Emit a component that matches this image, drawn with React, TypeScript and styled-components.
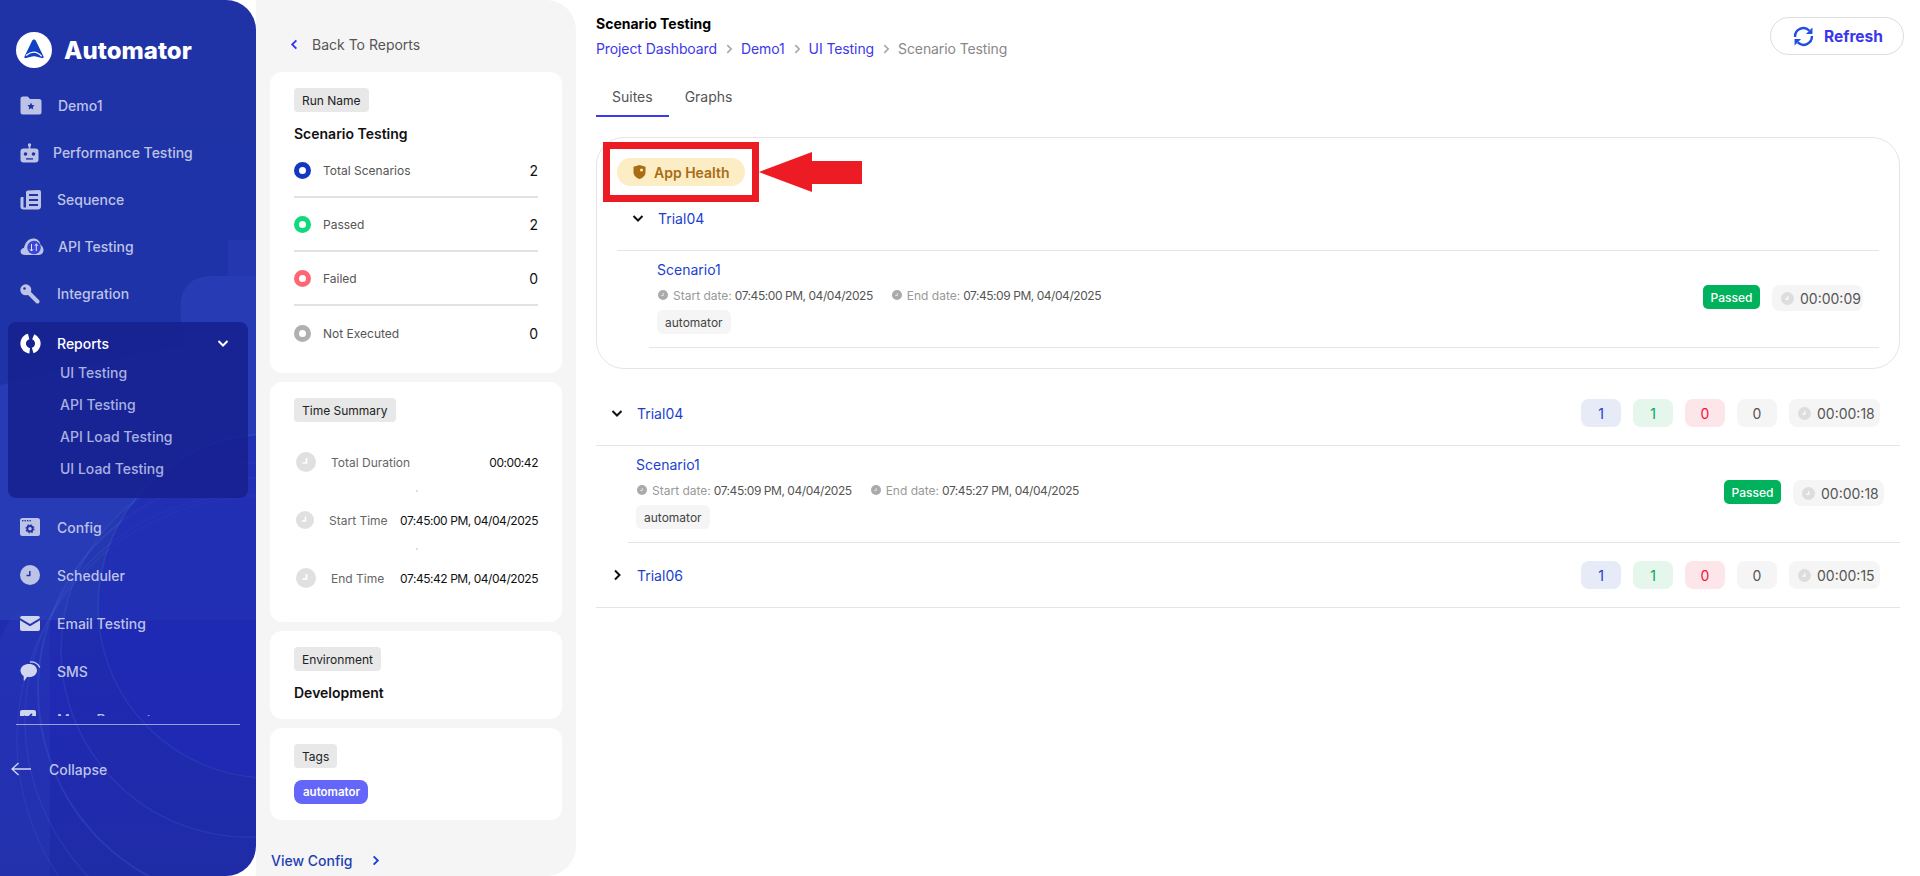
import React from 'react';
import styled, { createGlobalStyle } from 'styled-components';

const GlobalStyle = createGlobalStyle`
  html, body { margin: 0; padding: 0; background: #fff; }
  body { font-family: Inter, "Liberation Sans", sans-serif; font-size: 14px; color: #111; overflow: hidden; }
  * { box-sizing: border-box; }
`;

const Page = styled.div`
  display: flex;
  width: 1920px;
  height: 876px;
  overflow: hidden;
`;

/* sidebar */
const Sidebar = styled.aside`
  position: relative;
  flex: 0 0 256px;
  height: 876px;
  padding-top: 32px;
  border-radius: 0 30px 30px 0;
  background: linear-gradient(180deg, #1f33a7 0%, #1f33a9 55%, #2029b4 80%, #1f2ca6 100%);
  overflow: hidden;
  z-index: 1;
`;

const Waves = styled.svg`
  position: absolute;
  inset: 0;
  width: 256px;
  height: 876px;
`;

const Brand = styled.div`
  position: relative;
  display: flex;
  align-items: center;
  gap: 12px;
  padding-left: 16px;
  height: 36px;
  font-size: 24px;
  font-weight: 800;
  color: #fff;
`;

const NavScroll = styled.nav`
  position: relative;
  height: 634px;
  margin-top: 14px;
  overflow: hidden;
`;

const NavItem = styled.div<{ $h: number }>`
  display: flex;
  align-items: center;
  gap: 13px;
  height: ${p => p.$h}px;
  padding-left: 20px;
  color: #bdc3e7;
  font-weight: 500;
`;

const NavIcon = styled.span<{ $w: number }>`
  display: flex;
  flex: 0 0 ${p => p.$w}px;
  align-items: center;
`;

const ReportsGroup = styled.div`
  margin: 5px 8px;
  padding-bottom: 14px;
  border-radius: 8px;
  background: rgba(22, 32, 140, 0.82);
`;

const ReportsHead = styled.div`
  display: flex;
  align-items: center;
  gap: 13px;
  height: 34px;
  padding: 8px 18px 0 12px;
  color: #fff;
  font-weight: 500;
`;

const ReportsLabel = styled.span`
  flex: 1;
`;

const SubItem = styled.div`
  display: flex;
  align-items: center;
  height: 32px;
  padding-left: 52px;
  color: #a9b1e2;
  font-weight: 500;
`;

const SideRule = styled.div`
  position: relative;
  height: 1px;
  margin: 8px 16px 0;
  background: rgba(255, 255, 255, 0.55);
`;

const CollapseRow = styled.div`
  position: relative;
  display: flex;
  align-items: center;
  gap: 18px;
  height: 32px;
  margin-top: 28px;
  padding-left: 11px;
  color: #bdc3e7;
  font-weight: 500;
`;

/* run summary panel */
const Panel = styled.section`
  display: flex;
  flex-direction: column;
  flex: 0 0 320px;
  min-width: 0;
  height: 876px;
  padding: 34px 14px 6px;
  border-radius: 0 30px 30px 0;
  background: #f5f5f5;
`;

const BackRow = styled.div`
  display: flex;
  align-items: center;
  gap: 11px;
  height: 20px;
  margin: 0 0 18px 18px;
  color: #555;
  font-size: 14px;
`;

const Cards = styled.div`
  display: flex;
  flex-direction: column;
  gap: 9px;
`;

const InfoCard = styled.div<{ $pb?: number }>`
  padding: 16px 24px ${p => p.$pb ?? 16}px;
  border-radius: 12px;
  background: #fff;
`;

const Chip = styled.span`
  display: inline-flex;
  align-items: center;
  height: 24px;
  padding: 0 8px;
  border-radius: 4px;
  background: #e8e8e8;
  font-size: 12px;
  color: #222;
  vertical-align: top;
`;

const CardTitle = styled.div`
  margin-top: 12px;
  font-size: 14px;
  line-height: 20px;
  font-weight: 600;
  color: #111;
`;

const StatRow = styled.div<{ $last?: boolean }>`
  display: flex;
  align-items: center;
  gap: 12px;
  height: 54px;
  border-bottom: ${p => (p.$last ? 'none' : '2px solid #e2e2e2')};
`;

const StatDot = styled.span<{ $color: string }>`
  flex: 0 0 17px;
  width: 17px;
  height: 17px;
  border: 5px solid ${p => p.$color};
  border-radius: 50%;
`;

const StatLabel = styled.span`
  flex: 1;
  font-size: 12px;
  color: #555;
`;

const StatValue = styled.span`
  font-size: 14px;
  color: #111;
`;

const TimeList = styled.div`
  margin-top: 11px;
`;

const TimeRow = styled.div<{ $sep?: boolean }>`
  position: relative;
  display: flex;
  align-items: center;
  gap: 12px;
  height: 58px;
  padding-left: 2px;
  &::after {
    content: '';
    display: ${p => (p.$sep ? 'block' : 'none')};
    position: absolute;
    left: 50%;
    bottom: -1px;
    width: 2px;
    height: 2px;
    background: #ddd;
  }
`;

const TimeLabel = styled.span`
  flex: 1;
  margin-left: 3px;
  font-size: 12px;
  color: #666;
  white-space: nowrap;
`;

const TimeValue = styled.span`
  font-size: 12px;
  letter-spacing: -0.45px;
  color: #111;
  white-space: nowrap;
`;

const TagBadge = styled.div`
  display: flex;
  align-items: center;
  width: 74px;
  height: 24px;
  margin-top: 12px;
  padding-left: 9px;
  border-radius: 8px;
  background: #6366f8;
  color: #fff;
  font-size: 11.5px;
  font-weight: 600;
`;

const ViewConfig = styled.div`
  display: flex;
  align-items: center;
  gap: 17px;
  height: 20px;
  margin-top: auto;
  padding-left: 1px;
  color: #1c3fb4;
  font-size: 14px;
  font-weight: 500;
`;

/* main column */
const Main = styled.main`
  flex: 1;
  min-width: 0;
  padding: 14px 20px 0;
`;

const TopBar = styled.header`
  display: flex;
  align-items: flex-start;
  justify-content: space-between;
`;

const PageTitle = styled.h1`
  margin: 0;
  font-size: 14px;
  line-height: 20px;
  font-weight: 700;
  color: #000;
`;

const Crumbs = styled.div`
  display: flex;
  align-items: center;
  gap: 6px;
  margin-top: 5px;
  line-height: 20px;
  font-size: 14px;
  letter-spacing: -0.1px;
`;

const Crumb = styled.span<{ $current?: boolean }>`
  color: ${p => (p.$current ? '#888' : '#3d38e8')};
`;

const RefreshButton = styled.button`
  display: flex;
  align-items: center;
  gap: 10px;
  width: 134px;
  height: 38px;
  margin: 3px -4px 0 0;
  padding: 0 0 0 22px;
  border: 1px solid #ddd;
  border-radius: 19px;
  background: #fff;
  color: #3a36ee;
  font-family: inherit;
  font-size: 15.5px;
  font-weight: 700;
`;

const Tabs = styled.div`
  display: flex;
  margin-top: 29px;
`;

const Tab = styled.div<{ $active?: boolean }>`
  height: 29px;
  padding: 0 16px;
  line-height: 18px;
  font-size: 14px;
  color: #555;
  border-bottom: 2px solid ${p => (p.$active ? '#3a3af0' : 'transparent')};
`;

const HealthCard = styled.div`
  width: 1304px;
  height: 232px;
  margin-top: 20px;
  padding: 4px 20px 0 6px;
  border: 1px solid #e5e5e5;
  border-radius: 28px;
`;

const Annotated = styled.div`
  display: flex;
  align-items: center;
`;

const RedBox = styled.div`
  display: flex;
  align-items: center;
  width: 156px;
  height: 60px;
  padding-left: 7px;
  border: 7px solid #ed1c24;
`;

const HealthPill = styled.div`
  display: flex;
  align-items: center;
  gap: 8px;
  width: 128px;
  height: 28px;
  padding-left: 16px;
  border-radius: 14px;
  background: #fdedc4;
  color: #a96c14;
  font-size: 14px;
  font-weight: 600;
`;

const CardTrials = styled.div`
  margin-left: 14px;
`;

const Trial = styled.div<{ $mt?: number }>`
  margin-top: ${p => p.$mt ?? 0}px;
`;

const TrialHead = styled.div<{ $pt: number }>`
  display: flex;
  align-items: center;
  height: ${p => p.$pt + 49}px;
  padding: ${p => p.$pt}px 20px 16px 14px;
  border-bottom: 1px solid #e5e5e5;
`;

const TrialChevron = styled.span`
  display: flex;
  flex: 0 0 14px;
  margin-right: 13px;
`;

const TrialName = styled.span`
  flex: 1;
  font-size: 14px;
  color: #1a3fd0;
`;

const Counters = styled.div`
  display: flex;
  gap: 12px;
`;

const Counter = styled.span<{ $bg: string; $fg: string }>`
  display: flex;
  align-items: center;
  justify-content: center;
  width: 40px;
  height: 28px;
  border-radius: 8px;
  background: ${p => p.$bg};
  color: ${p => p.$fg};
  font-size: 14px;
`;

const Timer = styled.span`
  display: flex;
  align-items: center;
  gap: 6px;
  width: 91px;
  height: 26px;
  padding-left: 9px;
  border-radius: 8px;
  background: #f5f5f5;
  color: #555;
  font-size: 14px;
`;

const CounterTimer = styled(Timer)`
  height: 28px;
`;

const ScenarioRow = styled.div`
  display: flex;
  justify-content: space-between;
  height: 97px;
  margin-left: 32px;
  padding: 9px 16px 0 8px;
  border-bottom: 1px solid #e5e5e5;
`;

const ScenarioName = styled.div`
  font-size: 14px;
  line-height: 20px;
  color: #1a3fd0;
`;

const DateLine = styled.div`
  display: flex;
  align-items: center;
  height: 16px;
  margin-top: 7px;
  padding-left: 1px;
  font-size: 12px;
  color: #555;
`;

const DateKey = styled.span`
  margin: 0 3px 0 5px;
  color: #999;
`;

const DateValue = styled.span`
  margin-right: 19px;
  letter-spacing: -0.45px;
`;

const ScenarioTag = styled.span`
  display: inline-flex;
  align-items: center;
  height: 24px;
  margin-top: 7px;
  padding: 0 8px;
  border-radius: 6px;
  background: #f5f5f5;
  color: #444;
  font-size: 12px;
`;

const ScenarioStatus = styled.div`
  display: flex;
  align-items: flex-start;
  gap: 12px;
  margin-top: 25px;
`;

const Passed = styled.span`
  display: flex;
  align-items: center;
  justify-content: center;
  width: 57px;
  height: 24px;
  border-radius: 5px;
  background: #00b25c;
  color: #fff;
  font-size: 12px;
  font-weight: 500;
`;

/* drawings */
const Logo = () => (
  <svg width="36" height="36" viewBox="0 0 36 36">
    <circle cx="18" cy="18" r="18" fill="#fff" />
    <path d="M18 7.500c.9 0 1.500.6 1.900 1.300l7.500 15.400c.7 1.500-.2 2.300-1.700 1.900-2.700-.7-5-1.900-7.700-1.900-2.800 0-5 1.200-7.700 1.900-1.500.4-2.400-.4-1.700-1.900l7.500-15.400c.4-.7 1-1.300 1.900-1.300z" fill="#1341c6" />
    <path d="M10 23.500c2.500-2.200 5-3.400 7.700-3.400 3 0 5.500 1.400 8 4.300" fill="none" stroke="#fff" strokeWidth="1.300" />
  </svg>
);

const bg = '#2034a8';

const FolderIcon = () => (
  <svg width="22" height="19" viewBox="0 0 22 19">
    <path d="M.5 3A2.500 2.500 0 0 1 3 .5h4.700L10 3h9a2.500 2.500 0 0 1 2.500 2.500v10.500A2.500 2.500 0 0 1 19 18.500H3A2.500 2.500 0 0 1 .5 16z" fill="#bdc3e7" />
    <path d="M11 6.500l1.100 2.400 2.600.3-1.900 1.800.5 2.600-2.300-1.300-2.300 1.300.5-2.600-1.900-1.800 2.600-.3z" fill={bg} />
  </svg>
);

const RobotIcon = () => (
  <svg width="19" height="20" viewBox="0 0 19 20">
    <circle cx="9.500" cy="2" r="1.700" fill="#bdc3e7" />
    <rect x="8.700" y="2" width="1.600" height="4" fill="#bdc3e7" />
    <rect x="0.500" y="5.500" width="18" height="14" rx="3" fill="#bdc3e7" />
    <circle cx="5.500" cy="11" r="1.800" fill={bg} />
    <circle cx="13.500" cy="11" r="1.800" fill={bg} />
    <rect x="6" y="15.200" width="7" height="1.400" fill={bg} />
  </svg>
);

const SequenceIcon = () => (
  <svg width="21" height="20" viewBox="0 0 21 20">
    <path d="M6 2A2 2 0 0 1 8 .5l11-.5a2 2 0 0 1 2 2v14a3 3 0 0 1-3 3.500H3.500C1.500 19.500.5 18.500.5 17V8.500C.5 7.500 1 7 2 7h1.500v10.500H6z" fill="#bdc3e7" />
    <rect x="9" y="4" width="9" height="2" fill={bg} />
    <rect x="9" y="9" width="9" height="2" fill={bg} />
    <rect x="9" y="14" width="9" height="2" fill={bg} />
  </svg>
);

const CloudIcon = () => (
  <svg width="24" height="18" viewBox="0 0 24 18">
    <path d="M5 17C2.300 17 .5 15.500.5 13.500c0-2 1.500-3.400 3.500-3.600C5 4.500 8.500.5 13.500.5c3.800 0 6.600 2.700 7 6.300 1.700 1.100 3 3 3 5.300 0 2.700-1.800 4.900-4.500 4.900z" fill="#bdc3e7" />
    <circle cx="14" cy="9.500" r="6.800" fill="#3c46d6" />
    <path d="M11.500 6v7M11.500 13l-1.700-1.700M11.500 13l1.700-1.700M16.300 13V6M16.300 6l-1.700 1.700M16.300 6 18 7.700" stroke="#e6e9fa" strokeWidth="1" fill="none" />
  </svg>
);

const KeyIcon = () => (
  <svg width="20" height="20" viewBox="0 0 20 20">
    <circle cx="5.800" cy="5.800" r="5.500" fill="#bdc3e7" />
    <circle cx="4.500" cy="4.500" r="1.300" fill={bg} />
    <path d="M8.500 8.500l9 9" stroke="#bdc3e7" strokeWidth="4" strokeLinecap="round" />
  </svg>
);

const ReportsIcon = () => (
  <svg width="21" height="21" viewBox="0 0 21 21">
    <circle cx="10.500" cy="10.500" r="7.300" fill="none" stroke="#fff" strokeWidth="5.600" strokeDasharray="17.800 3 20.100 5" transform="rotate(-68 10.500 10.500)" />
  </svg>
);

const ConfigIcon = () => (
  <svg width="20" height="18" viewBox="0 0 20 18">
    <rect width="20" height="18" rx="2.500" fill="#bdc3e7" />
    <rect x="2" y="2" width="1.400" height="1.400" fill={bg} />
    <rect x="4.500" y="2" width="1.400" height="1.400" fill={bg} />
    <rect x="7" y="2" width="1.400" height="1.400" fill={bg} />
    <rect x="9.500" y="2" width="1.400" height="1.400" fill={bg} />
    <circle cx="10" cy="10.800" r="2.700" fill="none" stroke={bg} strokeWidth="2" />
    <circle cx="10" cy="10.800" r="4" fill="none" stroke={bg} strokeWidth="1.200" strokeDasharray="1.500 1.650" />
  </svg>
);

const SchedulerIcon = () => (
  <svg width="20" height="20" viewBox="0 0 20 20">
    <circle cx="10" cy="10" r="10" fill="#bdc3e7" />
    <path d="M9.800 6v4.500H6.500" fill="none" stroke={bg} strokeWidth="1.500" />
  </svg>
);

const MailIcon = () => (
  <svg width="20" height="15" viewBox="0 0 20 15">
    <path d="M0 2a2 2 0 0 1 2-2h16a2 2 0 0 1 2 2l-10 6z" fill="#d0d5f0" />
    <path d="M0 4.300l10 6 10-6V13a2 2 0 0 1-2 2H2a2 2 0 0 1-2-2z" fill="#d0d5f0" />
  </svg>
);

const SmsIcon = () => (
  <svg width="21" height="21" viewBox="0 0 21 21">
    <path d="M9 3c4.600 0 8 2.700 8 6.500S13.600 16 9.500 16c-.8 0-1.500 0-2.300-.2L4.500 19.500c-.4.400-.8.200-.8-.3V15C1.500 13.800.5 11.700.5 9.500.5 5.700 4.400 3 9 3z" fill="#d0d5f0" />
    <path d="M10 1c4.500-.5 8.500 2 9.800 5.500" fill="none" stroke="#d0d5f0" strokeWidth="1.300" />
  </svg>
);

const CheckIcon = () => (
  <svg width="16" height="18" viewBox="0 0 16 18">
    <rect width="16" height="18" rx="2" fill="#d0d5f0" />
    <path d="M4 6l3 3 5-5" fill="none" stroke={bg} strokeWidth="1.800" />
  </svg>
);

const LongArrow = () => (
  <svg width="20" height="14" viewBox="0 0 20 14">
    <path d="M20 7H1M7.500 1 1 7l6.500 6" fill="none" stroke="#d4d8f2" strokeWidth="1.300" />
  </svg>
);

const Chevron = ({ dir, color = '#111', size = 14 }: { dir: 'left' | 'right' | 'down'; color?: string; size?: number }) => {
  const d = dir === 'left' ? 'M9 2.500 4.500 7 9 11.500' : dir === 'right' ? 'M5 2.500 9.500 7 5 11.500' : 'M2.500 5 7 9.500 11.500 5';
  return (
    <svg width={size} height={size} viewBox="0 0 14 14">
      <path d={d} fill="none" stroke={color} strokeWidth="2" />
    </svg>
  );
};

const ClockGlyph = ({ size, fill = '#e0e0e0', hand = '#fff' }: { size: number; fill?: string; hand?: string }) => (
  <svg width={size} height={size} viewBox="0 0 20 20" style={{ flex: `0 0 ${size}px` }}>
    <circle cx="10" cy="10" r="10" fill={fill} />
    <path d="M10.500 6v5H6.500" fill="none" stroke={hand} strokeWidth="1.700" />
  </svg>
);

const ShieldIcon = () => (
  <svg width="13" height="14" viewBox="0 0 13 14">
    <path d="M6.500 0 12.500 1.800V7c0 3.500-2.500 5.800-6 7C3 12.800.5 10.500.5 7V1.800z" fill="#a96c14" />
    <circle cx="8.500" cy="5" r="1.500" fill="#fdedc4" />
  </svg>
);

const RefreshGlyph = () => (
  <svg width="21" height="21" viewBox="0 0 20 20" fill="none">
    <path d="M2 10.500A8 8 0 0 1 15.500 4.300" stroke="#1f4fe0" strokeWidth="2.300" />
    <path d="M18 9.500A8 8 0 0 1 4.500 15.700" stroke="#1f4fe0" strokeWidth="2.300" />
    <path d="M18.500 1.500v6.200h-6.200z" fill="#1f4fe0" />
    <path d="M1.500 18.500v-6.200h6.200z" fill="#1f4fe0" />
  </svg>
);

const RedArrow = () => (
  <svg width="103" height="42" viewBox="0 0 103 42">
    <path d="M0 21 53 1v9h50v23H53v8z" fill="#ed1c24" />
  </svg>
);

const SideWaves = () => (
  <Waves viewBox="0 0 256 876" fill="none">
    <path d="M0 385C60 370 130 355 185 346 176 300 178 276 215 276H256V620H0z" fill="#2a3fb8" fillOpacity="0.75" />
    <path d="M228 240C240 240 256 240 256 240V276H228z" fill="#2a3ab2" fillOpacity="0.6" />
    <path d="M0 640C15 600 40 605 50 625V876H0z" fill="#2a3fb8" fillOpacity="0.35" />
    <circle cx="270" cy="606" r="172" stroke="#5168d8" strokeOpacity="0.25" strokeWidth="1.500" />
    <circle cx="248" cy="650" r="187" stroke="#5168d8" strokeOpacity="0.22" strokeWidth="1.500" fill="#1c2c9f" fillOpacity="0.18" />
    <circle cx="250" cy="690" r="212" stroke="#5168d8" strokeOpacity="0.24" strokeWidth="2" />
    <circle cx="250" cy="720" r="225" stroke="#5168d8" strokeOpacity="0.18" strokeWidth="1.500" />
    <circle cx="260" cy="740" r="243" stroke="#5168d8" strokeOpacity="0.16" strokeWidth="1.500" />
    <circle cx="270" cy="606" r="171" fill="#2029b8" fillOpacity="0.6" />
  </Waves>
);

const navTop = [
  { label: 'Demo1', icon: <FolderIcon />, w: 25 },
  { label: 'Performance Testing', icon: <RobotIcon />, w: 20 },
  { label: 'Sequence', icon: <SequenceIcon />, w: 24 },
  { label: 'API Testing', icon: <CloudIcon />, w: 25 },
  { label: 'Integration', icon: <KeyIcon />, w: 24 },
];

const navBottom = [
  { label: 'Config', icon: <ConfigIcon />, w: 24 },
  { label: 'Scheduler', icon: <SchedulerIcon />, w: 24 },
  { label: 'Email Testing', icon: <MailIcon />, w: 24 },
  { label: 'SMS', icon: <SmsIcon />, w: 24 },
  { label: 'Mass Request', icon: <CheckIcon />, w: 24 },
];

const subItems = ['UI Testing', 'API Testing', 'API Load Testing', 'UI Load Testing'];

const stats = [
  { label: 'Total Scenarios', value: 2, color: '#1338c0' },
  { label: 'Passed', value: 2, color: '#12d97a' },
  { label: 'Failed', value: 0, color: '#ff6673' },
  { label: 'Not Executed', value: 0, color: '#b0b0b0' },
];

const times = [
  { label: 'Total Duration', value: '00:00:42', icon: 20 },
  { label: 'Start Time', value: '07:45:00 PM, 04/04/2025', icon: 18 },
  { label: 'End Time', value: '07:45:42 PM, 04/04/2025', icon: 20 },
];

const Scenario = ({ start, end, duration }: { start: string; end: string; duration: string }) => (
  <ScenarioRow>
    <div>
      <ScenarioName>Scenario1</ScenarioName>
      <DateLine>
        <ClockGlyph size={10} fill="#aaa" hand="#eee" />
        <DateKey>Start date:</DateKey>
        <DateValue>{start}</DateValue>
        <ClockGlyph size={10} fill="#aaa" hand="#eee" />
        <DateKey>End date:</DateKey>
        <DateValue>{end}</DateValue>
      </DateLine>
      <ScenarioTag>automator</ScenarioTag>
    </div>
    <ScenarioStatus>
      <Passed>Passed</Passed>
      <Timer>
        <ClockGlyph size={13} fill="#ddd" />
        {duration}
      </Timer>
    </ScenarioStatus>
  </ScenarioRow>
);

const CounterSet = ({ duration }: { duration: string }) => (
  <Counters>
    <Counter $bg="#e7ebf8" $fg="#1a3fd0">1</Counter>
    <Counter $bg="#e5f6ec" $fg="#00a85a">1</Counter>
    <Counter $bg="#fde6e9" $fg="#f5103c">0</Counter>
    <Counter $bg="#f5f5f5" $fg="#555">0</Counter>
    <CounterTimer>
      <ClockGlyph size={13} fill="#ddd" />
      {duration}
    </CounterTimer>
  </Counters>
);

export default function App() {
  return (
    <Page>
      <GlobalStyle />
      <Sidebar>
        <SideWaves />
        <Brand>
          <Logo />
          Automator
        </Brand>
        <NavScroll>
          {navTop.map(item => (
            <NavItem key={item.label} $h={47}>
              <NavIcon $w={item.w}>{item.icon}</NavIcon>
              {item.label}
            </NavItem>
          ))}
          <ReportsGroup>
            <ReportsHead>
              <NavIcon $w={24}><ReportsIcon /></NavIcon>
              <ReportsLabel>Reports</ReportsLabel>
              <Chevron dir="down" color="#fff" />
            </ReportsHead>
            {subItems.map(s => <SubItem key={s}>{s}</SubItem>)}
          </ReportsGroup>
          {navBottom.map(item => (
            <NavItem key={item.label} $h={48}>
              <NavIcon $w={item.w}>{item.icon}</NavIcon>
              {item.label}
            </NavItem>
          ))}
        </NavScroll>
        <SideRule />
        <CollapseRow>
          <LongArrow />
          Collapse
        </CollapseRow>
      </Sidebar>

      <Panel>
        <BackRow>
          <Chevron dir="left" color="#3a36ee" size={13} />
          Back To Reports
        </BackRow>
        <Cards>
          <InfoCard $pb={13}>
            <Chip>Run Name</Chip>
            <CardTitle>Scenario Testing</CardTitle>
            {stats.map((s, i) => (
              <StatRow key={s.label} $last={i === stats.length - 1}>
                <StatDot $color={s.color} />
                <StatLabel>{s.label}</StatLabel>
                <StatValue>{s.value}</StatValue>
              </StatRow>
            ))}
          </InfoCard>
          <InfoCard $pb={15}>
            <Chip>Time Summary</Chip>
            <TimeList>
              {times.map((t, i) => (
                <TimeRow key={t.label} $sep={i < times.length - 1}>
                  <ClockGlyph size={t.icon} />
                  <TimeLabel>{t.label}</TimeLabel>
                  <TimeValue>{t.value}</TimeValue>
                </TimeRow>
              ))}
            </TimeList>
          </InfoCard>
          <InfoCard>
            <Chip>Environment</Chip>
            <CardTitle>Development</CardTitle>
          </InfoCard>
          <InfoCard>
            <Chip>Tags</Chip>
            <TagBadge>automator</TagBadge>
          </InfoCard>
        </Cards>
        <ViewConfig>
          View Config
          <Chevron dir="right" color="#1f3fd0" size={13} />
        </ViewConfig>
      </Panel>

      <Main>
        <TopBar>
          <div>
            <PageTitle>Scenario Testing</PageTitle>
            <Crumbs>
              <Crumb>Project Dashboard</Crumb>
              <Chevron dir="right" color="#aaa" size={12} />
              <Crumb>Demo1</Crumb>
              <Chevron dir="right" color="#aaa" size={12} />
              <Crumb>UI Testing</Crumb>
              <Chevron dir="right" color="#aaa" size={12} />
              <Crumb $current>Scenario Testing</Crumb>
            </Crumbs>
          </div>
          <RefreshButton>
            <RefreshGlyph />
            Refresh
          </RefreshButton>
        </TopBar>
        <Tabs>
          <Tab $active>Suites</Tab>
          <Tab>Graphs</Tab>
        </Tabs>
        <HealthCard>
          <Annotated>
            <RedBox>
              <HealthPill>
                <ShieldIcon />
                App Health
              </HealthPill>
            </RedBox>
            <RedArrow />
          </Annotated>
          <CardTrials>
            <Trial>
              <TrialHead $pt={0}>
                <TrialChevron><Chevron dir="down" /></TrialChevron>
                <TrialName>Trial04</TrialName>
              </TrialHead>
              <Scenario start="07:45:00 PM, 04/04/2025" end="07:45:09 PM, 04/04/2025" duration="00:00:09" />
            </Trial>
          </CardTrials>
        </HealthCard>
        <Trial $mt={12}>
          <TrialHead $pt={16}>
            <TrialChevron><Chevron dir="down" /></TrialChevron>
            <TrialName>Trial04</TrialName>
            <CounterSet duration="00:00:18" />
          </TrialHead>
          <Scenario start="07:45:09 PM, 04/04/2025" end="07:45:27 PM, 04/04/2025" duration="00:00:18" />
        </Trial>
        <Trial>
          <TrialHead $pt={16}>
            <TrialChevron><Chevron dir="right" /></TrialChevron>
            <TrialName>Trial06</TrialName>
            <CounterSet duration="00:00:15" />
          </TrialHead>
        </Trial>
      </Main>
    </Page>
  );
}
